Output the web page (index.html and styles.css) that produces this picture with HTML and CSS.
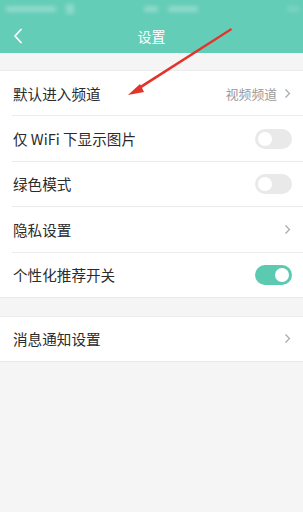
FILE: index.html
```html
<!DOCTYPE html>
<html>
<head>
<meta charset="utf-8">
<link rel="stylesheet" href="styles.css">
</head>
<body>
<div class="page">
  <div class="header">
    <div class="statusbar">
      <span class="blob b1"></span><span class="blob b2"></span><span class="blob b3"></span><span class="blob b4"></span><span class="blob b5"></span>
    </div>
    <div class="navbar">
      <svg class="back" width="12" height="16" viewBox="0 0 12 16"><path d="M9 1.5 L3 8 L9 14.5" fill="none" stroke="#fff" stroke-width="1.8" stroke-linecap="round" stroke-linejoin="round"/></svg>
      <div class="title">设置</div>
    </div>
  </div>
  <div class="gap top-gap"></div>
  <div class="group">
    <div class="row">
      <span class="label">默认进入频道</span>
      <span class="right"><span class="value">视频频道</span><svg class="chev" width="7" height="11" viewBox="0 0 7 11"><path d="M1.5 1.5 L5.5 5.5 L1.5 9.5" fill="none" stroke="#a8a8a8" stroke-width="1.2"/></svg></span>
    </div>
    <div class="row">
      <span class="label">仅 WiFi 下显示图片</span>
      <span class="toggle"><span class="knob"></span></span>
    </div>
    <div class="row">
      <span class="label">绿色模式</span>
      <span class="toggle"><span class="knob"></span></span>
    </div>
    <div class="row">
      <span class="label">隐私设置</span>
      <span class="right"><svg class="chev" width="7" height="11" viewBox="0 0 7 11"><path d="M1.5 1.5 L5.5 5.5 L1.5 9.5" fill="none" stroke="#a8a8a8" stroke-width="1.2"/></svg></span>
    </div>
    <div class="row last">
      <span class="label">个性化推荐开关</span>
      <span class="toggle on"><span class="knob"></span></span>
    </div>
  </div>
  <div class="gap mid-gap"></div>
  <div class="group">
    <div class="row last">
      <span class="label">消息通知设置</span>
      <span class="right"><svg class="chev" width="7" height="11" viewBox="0 0 7 11"><path d="M1.5 1.5 L5.5 5.5 L1.5 9.5" fill="none" stroke="#a8a8a8" stroke-width="1.2"/></svg></span>
    </div>
  </div>
  <svg class="arrow" width="303" height="120" viewBox="0 0 303 120">
    <polygon points="231,28 232,30 137,91 135,89" fill="#e3332b"/>
    <polygon points="128,95 140,84 144,92" fill="#e3332b"/>
  </svg>
</div>
</body>
</html>
```
FILE: styles.css
```css
* { box-sizing: border-box; }
html, body { margin: 0; padding: 0; }
body {
  background: #f5f5f5;
  font-family: "Noto Sans CJK SC", "Liberation Sans", sans-serif;
  width: 303px;
  height: 512px;
  overflow: hidden;
}
.page { position: relative; }
.header { background: #64cdb7; height: 53px; }
.statusbar {
  height: 18px;
  display: flex;
  align-items: center;
  padding: 0 4px;
  gap: 10px;
  filter: blur(2px);
}
.blob { display: block; height: 6px; background: rgba(255,255,255,0.28); border-radius: 1px; }
.b1 { width: 50px; margin-left: 2px; }
.b2 { width: 8px; height: 10px; }
.b3 { width: 14px; margin-left: 60px; }
.b4 { width: 30px; }
.b5 { width: 12px; margin-left: auto; opacity: 0.5; }
.navbar {
  height: 35px;
  position: relative;
  display: flex;
  align-items: center;
  justify-content: center;
}
.back { position: absolute; left: 12px; top: 10px; }
.title { color: #fff; font-size: 14px; }
.top-gap { height: 17px; }
.mid-gap { height: 18px; }
.group {
  background: #fff;
  border-top: 1px solid #ececec;
  border-bottom: 1px solid #e8e8e8;
  padding-left: 12px;
}
.row {
  height: 45.4px;
  display: flex;
  align-items: center;
  justify-content: space-between;
  padding-right: 11px;
  border-bottom: 1px solid #ececec;
}
.row.last { border-bottom: none; height: 44px; }
.label { font-size: 14.6px; color: #2b2b2b; padding-left: 1px; }
.right { display: flex; align-items: center; gap: 7px; }
.value { font-size: 12.8px; color: #9a9a9a; }
.chev { display: block; margin-right: 1px; }
.toggle {
  width: 37px;
  height: 20px;
  border-radius: 10px;
  background: #e9e9e9;
  display: flex;
  align-items: center;
  padding: 0 3px;
}
.knob { width: 14px; height: 14px; border-radius: 50%; background: #fff; display: block; }
.toggle.on { background: #5ccab0; justify-content: flex-end; }
.arrow { position: absolute; left: 0; top: 0; }
```
